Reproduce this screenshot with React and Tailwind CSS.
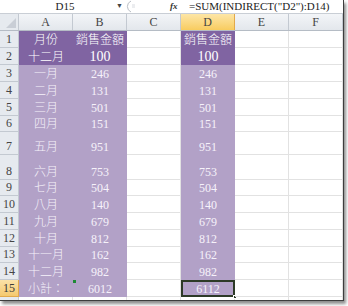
import React from "react";

const font = "font-['Liberation_Serif','Noto_Sans_CJK_TC',serif]";

const rows = [
  { n: 1, h: "h-[17px]", a: "月份", b: "銷售金額", d: "銷售金額", head: true },
  { n: 2, h: "h-[17px]", a: "十二月", b: "100", d: "100", head: true, big: true },
  { n: 3, h: "h-[17px]", a: "一月", b: "246", d: "246" },
  { n: 4, h: "h-[17px]", a: "二月", b: "131", d: "131" },
  { n: 5, h: "h-[17px]", a: "三月", b: "501", d: "501" },
  { n: 6, h: "h-[16px]", a: "四月", b: "151", d: "151" },
  { n: 7, h: "h-[23px]", a: "五月", b: "951", d: "951" },
  { n: 8, h: "h-[25px]", a: "六月", b: "753", d: "753" },
  { n: 9, h: "h-[16px]", a: "七月", b: "504", d: "504" },
  { n: 10, h: "h-[17px]", a: "八月", b: "140", d: "140" },
  { n: 11, h: "h-[17px]", a: "九月", b: "679", d: "679" },
  { n: 12, h: "h-[17px]", a: "十月", b: "812", d: "812" },
  { n: 13, h: "h-[16px]", a: "十一月", b: "162", d: "162" },
  { n: 14, h: "h-[17px]", a: "十二月", b: "982", d: "982" },
  { n: 15, h: "h-[17px]", a: "小計：", b: "6012", d: "6112", sel: true },
];

const cols = ["A", "B", "C", "D", "E", "F"];

// one cell of the sheet; purple fill hides the gridlines
const Cell = ({ text, fill, head, big, children }) => {
  let cls = "border-r border-b border-[#e2e2e2] bg-white";
  if (fill) cls = head ? "bg-[#8064a2] text-white" : "bg-[#b2a1c7] text-[#f6f2fa]";
  return (
    <div className={`relative w-[54px] shrink-0 h-full flex items-end justify-center pb-[1px] leading-[14px] font-light ${big ? "text-[14px]" : "text-[12px]"} ${cls}`}>
      {text}
      {children}
    </div>
  );
};

const RowLabel = ({ n, sel }) => (
  <div
    className={`w-[19px] shrink-0 h-full flex items-end justify-center pb-[1px] leading-[14px] text-[12px] border-r border-b ${
      sel
        ? "bg-gradient-to-b from-[#fbe2a8] to-[#f5c96e] border-[#e2a94a] text-[#3a3a3a]"
        : "bg-[#e6eaef] border-[#c3c9d1] text-[#454545]"
    }`}
  >
    {n}
  </div>
);

export default function App() {
  return (
    <div className={`w-[348px] h-[306px] bg-white overflow-hidden ${font}`}>
      <div className="w-[344px] h-[301px] border-r border-b border-[#3d3d3d] shadow-[2px_3px_3px_rgba(0,0,0,0.45)] overflow-hidden flex flex-col">
        {/* formula bar */}
        <div className="h-[14px] shrink-0 flex items-center border-b border-[#c9ced5] text-[11px] leading-[13px] text-[#222]">
          <div className="w-[116px] text-center pl-[14px]">D15</div>
          <div className="w-[8px] text-[7px] text-[#444]">▼</div>
          <svg width="12" height="13" viewBox="0 0 12 13" className="ml-[2px]">
            <path d="M5 1 A6 6 0 0 0 5 12" fill="none" stroke="#b9bec5" strokeWidth="1" />
            <path d="M6 5 h3 M6 7 h3" stroke="#d8dbe0" strokeWidth="1" />
          </svg>
          <div className="w-[32px]" />
          <div className="w-[18px] text-[9px] italic font-bold text-[#333]">fx</div>
          <div className="pl-[1px]">=SUM(INDIRECT("D2"):D14)</div>
        </div>

        {/* column headers */}
        <div className="h-[17px] shrink-0 flex border-b border-[#b5bcc5] text-[12px] leading-[14px] text-[#444]">
          <div className="w-[19px] shrink-0 bg-[#e6eaef] border-r border-[#c3c9d1] relative">
            <svg width="10" height="10" viewBox="0 0 10 10" className="absolute right-[2px] bottom-[2px]">
              <polygon points="10,0 10,10 0,10" fill="#c9ced6" />
            </svg>
          </div>
          {cols.map((c) => (
            <div
              key={c}
              className={`w-[54px] shrink-0 flex items-center justify-center border-r ${
                c === "D"
                  ? "bg-gradient-to-b from-[#fde6a6] to-[#f8cc5e] border-[#e2a94a]"
                  : "bg-gradient-to-b from-[#f3f5f8] to-[#e3e7ec] border-[#c3c9d1]"
              }`}
            >
              {c}
            </div>
          ))}
        </div>

        {/* rows */}
        {rows.map((r) => (
          <div key={r.n} className={`flex shrink-0 ${r.h}`}>
            <RowLabel n={r.n} sel={r.sel} />
            <Cell text={r.a} fill head={r.head} />
            <Cell text={r.b} fill head={r.head} big={r.big}>
              {r.sel && <div className="absolute left-0 top-0 w-[3px] h-[3px] bg-[#1e8a34]" />}
            </Cell>
            <Cell />
            <Cell text={r.d} fill head={r.head} big={r.big}>
              {r.sel && (
                <>
                  <div className="absolute inset-0 border-2 border-[#2d3a27]" />
                  <div className="absolute right-[-2px] bottom-[-2px] w-[4px] h-[4px] bg-[#2d3a27] border border-white" />
                </>
              )}
            </Cell>
            <Cell />
            <Cell />
          </div>
        ))}

        {/* sliver of row 16 */}
        <div className="flex h-[3px] shrink-0">
          <div className="w-[19px] shrink-0 bg-[#e6eaef] border-r border-[#c3c9d1]" />
          {cols.map((c) => (
            <div key={c} className="w-[54px] shrink-0 border-r border-[#e2e2e2]" />
          ))}
        </div>
      </div>
    </div>
  );
}
